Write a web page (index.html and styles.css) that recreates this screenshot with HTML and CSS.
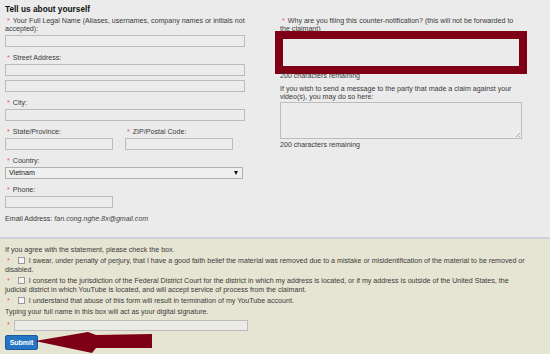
FILE: index.html
```html
<!DOCTYPE html>
<html lang="en">
<head>
    <meta charset="UTF-8">
    <meta name="viewport" content="width=device-width, initial-scale=1.0">
    <title>Counter Notification</title>
    <link rel="stylesheet" href="styles.css">
</head>
<body>
    <div class="top">
        <div class="col-left">
            <h2 class="title">Tell us about yourself</h2>
            <div class="field">
                <label><span class="req">*</span>Your Full Legal Name (Aliases, usernames, company names or initials not accepted):</label>
                <input type="text" class="text-input full">
            </div>
            <div class="field">
                <label><span class="req">*</span>Street Address:</label>
                <input type="text" class="text-input full">
                <input type="text" class="text-input full second">
            </div>
            <div class="field">
                <label><span class="req">*</span>City:</label>
                <input type="text" class="text-input full">
            </div>
            <div class="field-row">
                <div class="field">
                    <label><span class="req">*</span>State/Province:</label>
                    <input type="text" class="text-input half">
                </div>
                <div class="field zip">
                    <label><span class="req">*</span>ZIP/Postal Code:</label>
                    <input type="text" class="text-input half">
                </div>
            </div>
            <div class="field">
                <label><span class="req">*</span>Country:</label>
                <div class="select">
                    <span>Vietnam</span>
                    <span class="caret"></span>
                </div>
            </div>
            <div class="field">
                <label><span class="req">*</span>Phone:</label>
                <input type="text" class="text-input half">
            </div>
            <div class="email">Email Address: <em>fan.cong.nghe.8x@gmail.com</em></div>
        </div>

        <div class="col-right">
            <label class="reason-label"><span class="req">*</span>Why are you filing this counter-notification? (this will not be forwarded to the claimant)</label>
            <div class="reason-box"></div>
            <div class="remaining first">200 characters remaining</div>
            <p class="message-label">If you wish to send a message to the party that made a claim against your video(s), you may do so here:</p>
            <div class="message-box"><span class="grip"></span></div>
            <div class="remaining">200 characters remaining</div>
        </div>
    </div>

    <div class="agree">
        <p class="agree-note">If you agree with the statement, please check the box.</p>
        <p class="check"><span class="req">*</span><input type="checkbox">I swear, under penalty of perjury, that I have a good faith belief the material was removed due to a mistake or misidentification of the material to be removed or disabled.</p>
        <p class="check"><span class="req">*</span><input type="checkbox">I consent to the jurisdiction of the Federal District Court for the district in which my address is located, or if my address is outside of the United States, the judicial district in which YouTube is located, and will accept service of process from the claimant.</p>
        <p class="check"><span class="req">*</span><input type="checkbox">I understand that abuse of this form will result in termination of my YouTube account.</p>
        <p class="sig-note">Typing your full name in this box will act as your digital signature.</p>
        <div class="sig-row">
            <span class="req">*</span>
            <input type="text" class="text-input sig">
        </div>
        <button type="submit" class="submit">Submit</button>
    </div>

    <svg class="arrow" width="160" height="30" viewBox="0 0 160 30">
        <polygon points="35,11 88,2 96,5 152,4 152,18 96,18 92,23" fill="#7d0014"/>
    </svg>
</body>
</html>
```

FILE: styles.css
```css
body {
    margin: 0;
    font-family: "Liberation Sans", Arial, sans-serif;
    font-size: 7.1px;
    line-height: 8px;
    color: #3a3a3a;
    background: #e6e5d3;
    position: relative;
    min-height: 354px;
}
.top {
    display: flex;
    background: #ebebeb;
    padding: 5px 5px 14px;
    border-bottom: 2px solid #cdd3dc;
}
.col-left {
    width: 245px;
}
.col-right {
    width: 245px;
    margin-left: 30px;
    padding-top: 12px;
}
.title {
    margin: 0 0 4px;
    font-size: 8.3px;
    line-height: 8px;
    font-weight: bold;
    color: #111;
}
.req {
    color: #de5a70;
    margin: 0 3px 0 2px;
}
label {
    display: block;
    margin-bottom: 2px;
}
.field {
    margin-bottom: 7px;
}
.field-row {
    display: flex;
}
.field-row .field {
    width: 120px;
}
.text-input {
    display: block;
    box-sizing: border-box;
    height: 12px;
    margin: 0;
    padding: 0;
    border: 1px solid #bcbcbc;
    background: #ececec;
}
.full {
    width: 240px;
}
.second {
    margin-top: 4px;
}
.half {
    width: 108px;
}
.select {
    display: flex;
    align-items: center;
    justify-content: space-between;
    box-sizing: border-box;
    width: 238px;
    height: 12px;
    padding: 0 4px 0 3px;
    border: 1px solid #b0b0b0;
    background: #efefef;
    color: #222;
}
.caret {
    width: 0;
    height: 0;
    border-left: 2px solid transparent;
    border-right: 2px solid transparent;
    border-top: 4px solid #111;
}
.email em {
    color: #444;
}
.reason-label {
    margin: 0;
}
.reason-box {
    box-sizing: border-box;
    width: 252px;
    height: 43px;
    margin: -2px 0 0 -5px;
    border: 8px solid #7f0016;
    background: #ececec;
}
.remaining {
    margin-top: 2px;
}
.remaining.first {
    margin-top: -2px;
}
.message-label {
    margin: 5px 0 1px;
}
.message-box {
    position: relative;
    box-sizing: border-box;
    width: 242px;
    height: 37px;
    border: 1px solid #bcbcbc;
    background: #ececec;
}
.grip {
    position: absolute;
    right: 1px;
    bottom: 1px;
    width: 5px;
    height: 5px;
    background: linear-gradient(135deg, transparent 55%, #aaa 55%, #aaa 65%, transparent 65%, transparent 80%, #aaa 80%);
}
.agree {
    padding: 7px 21px 0 5px;
    line-height: 9px;
}
.agree p {
    margin: 0 0 2px;
}
.check input {
    appearance: none;
    -webkit-appearance: none;
    box-sizing: border-box;
    width: 7px;
    height: 7px;
    margin: 0 4px 0 5px;
    border: 1px solid #9a9a9a;
    background: #f3f3f3;
    vertical-align: -1px;
}
.agree .sig-note {
    margin: 0;
}
.sig-row {
    display: flex;
    align-items: center;
    margin-top: 3px;
}
.sig-row .req {
    margin-right: 4px;
}
.sig {
    width: 234px;
    height: 11px;
    background: #ebebe6;
}
.submit {
    display: block;
    box-sizing: border-box;
    width: 33px;
    height: 15px;
    margin-top: 4px;
    padding: 0;
    border: 1px solid #1a5b9e;
    border-radius: 2px;
    background: #2674c4;
    color: #fff;
    font-family: "Liberation Sans", Arial, sans-serif;
    font-size: 7px;
    font-weight: bold;
}
.arrow {
    position: absolute;
    left: 0;
    top: 330px;
}
```
